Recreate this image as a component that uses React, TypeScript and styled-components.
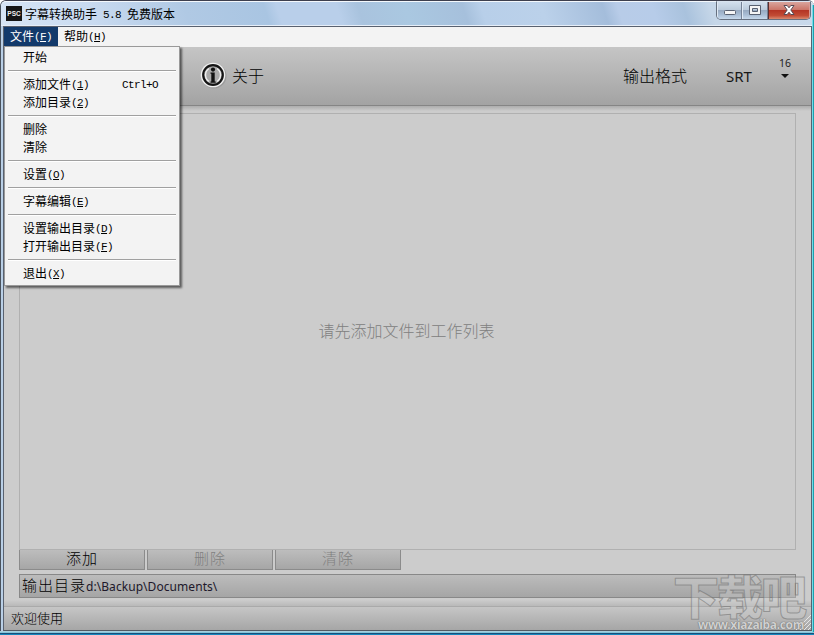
import React from "react";
import styled, { createGlobalStyle } from "styled-components";

const Global = createGlobalStyle`
  * { box-sizing: border-box; }
  html, body { margin: 0; padding: 0; overflow: hidden; }
  body { font-family: "Noto Sans CJK SC", sans-serif; color: #000; }
`;

const Frame = styled.div`
  width: 814px;
  height: 635px;
  display: flex;
  flex-direction: column;
  border-top: 1px solid #3d3f4e;
  border-left: 1px solid #4a525c;
  border-radius: 6px 6px 0 0;
  background: #b9cfe6;
  position: relative;
`;

const TitleBar = styled.header`
  height: 25px;
  flex: none;
  display: flex;
  align-items: flex-start;
  padding-left: 5px;
  border-top: 1px solid #f4f8fc;
  border-bottom: 1px solid #e6eef8;
  border-radius: 5px 5px 0 0;
  background: linear-gradient(72deg, #d7e5f5 0, #c8daf0 90px, #b0c9e4 180px, #a9c5e2 256px, #b9cfea 268px, #b9cfea 325px, #a9c3de 345px, #aac8e1 390px, #a6c0dc 445px, #b8cfe9 462px, #bbd1ea 520px, #a4bddb 578px, #b8cce8 592px, #b7cce9 625px, #a9c2dd 655px, #c5d6e8 680px, #c9d9eb 100%);
`;

const AppIcon = styled.div`
  width: 16px;
  height: 15px;
  margin: 4px 3px 0 0;
  background: #151515;
  color: #eee;
  font: bold 6.5px/15px "Liberation Sans", sans-serif;
  text-align: center;
`;

const Title = styled.div`
  flex: 1;
  height: 24px;
  font-size: 12px;
  line-height: 24px;
  white-space: pre;
`;

const Latin = styled.span`
  position: relative;
  top: -1px;
  font-family: "Liberation Mono", monospace;
  font-size: 11px;
  letter-spacing: -0.6px;
  white-space: pre;
  u { text-underline-offset: 1px; text-decoration-thickness: 1px; }
`;

const WindowControls = styled.div`
  display: flex;
  width: 95px;
  height: 19px;
  margin: -1px 3px 0 0;
  border: 1px solid #66707f;
  border-top-color: #d9e3ef;
  border-radius: 0 0 5px 5px;
  overflow: hidden;
`;

const ControlButton = styled.button<{ $width: number; $close?: boolean }>`
  width: ${(p) => p.$width}px;
  padding: 0 0 1px;
  border: 0;
  border-left: 1px solid ${(p) => (p.$close ? "#5d2d2d" : "#dfe9f4")};
  border-right: 1px solid ${(p) => (p.$close ? "#d99b94" : "#758296")};
  background: ${(p) =>
    p.$close
      ? "linear-gradient(#d9a59d 0, #cb7669 45%, #b43525 50%, #c24c35 80%, #d98a70 100%)"
      : "linear-gradient(#d2dfed 0, #bccbdc 45%, #98abc2 50%, #a9bdd4 75%, #c7d9eb 100%)"};
  svg { display: block; margin: auto; }
`;

const Client = styled.main`
  flex: none;
  width: 809px;
  height: 605px;
  margin-left: 2px;
  display: flex;
  flex-direction: column;
  border: 1px solid #59616f;
  border-bottom-color: #515b62;
  background: #ccc;
`;

const MenuBar = styled.nav`
  height: 20px;
  flex: none;
  display: flex;
  background: #f3f3f3;
`;

const MenuTitle = styled.div<{ $active?: boolean }>`
  width: 54px;
  padding-left: 6px;
  font-size: 12px;
  line-height: 18px;
  white-space: nowrap;
  color: ${(p) => (p.$active ? "#fff" : "#000")};
  background: ${(p) => (p.$active ? "#133a6b" : "transparent")};
`;

const Toolbar = styled.div`
  height: 59px;
  flex: none;
  display: flex;
  align-items: flex-start;
  padding-left: 195px;
  background: linear-gradient(#c5c5c5, #a3a3a3);
  border-bottom: 1px solid #858585;
`;

const InfoIcon = styled.svg`
  width: 28px;
  height: 28px;
  margin: 14px 5px 0 0;
`;

const ToolLabel = styled.div<{ $width: number }>`
  width: ${(p) => p.$width}px;
  padding-top: 16px;
  font-size: 16px;
  font-weight: 300;
  line-height: 24px;
  white-space: nowrap;
`;

const Format = styled.div`
  width: 52px;
  padding-top: 17px;
  font: 15px/24px "Noto Sans", sans-serif;
  color: #181818;
`;

const Count = styled.div`
  width: 14px;
  padding-top: 9px;
  text-align: center;
  font: 10.5px/14px "Noto Sans", sans-serif;
  color: #222;
  svg { display: block; margin: 4px auto 0; }
`;

const Body = styled.section`
  height: 500px;
  flex: none;
  padding: 7px 0 0 15px;
  background: linear-gradient(#adadad 0, #ccc 5px, #ccc 494px, #b9b9b9 500px);
`;

const FileList = styled.div`
  width: 777px;
  height: 437px;
  display: flex;
  align-items: center;
  justify-content: center;
  padding: 0 2px 4px 0;
  border: 1px solid #b0b0b0;
  font-size: 16px;
  font-weight: 300;
  color: #808080;
`;

const ButtonRow = styled.div`
  display: flex;
  gap: 2px;
  height: 20px;
`;

const ActionButton = styled.button`
  width: 126px;
  height: 20px;
  padding: 0 0 4px;
  border: 1px solid #8b8b8b;
  border-top: 0;
  background: linear-gradient(#bdbdbd, #a6a6a6);
  font: 300 15px/15px "Noto Sans CJK SC", sans-serif;
  letter-spacing: 1px;
  color: #000;
  &:disabled { color: #808080; }
`;

const OutputBar = styled.div`
  width: 777px;
  height: 24px;
  margin-top: 4px;
  display: flex;
  padding-left: 2px;
  border: 1px solid #888;
  background: linear-gradient(#bcbcbc, #a5a5a5);
  font-size: 15px;
  font-weight: 300;
  line-height: 20px;
`;

const OutputName = styled.span`
  width: 64px;
  letter-spacing: 1px;
  white-space: nowrap;
`;

const Path = styled.span`
  font: 12px/24px "Noto Sans", sans-serif;
  letter-spacing: 0.06px;
  color: #20182a;
`;

const StatusBar = styled.footer`
  position: relative;
  flex: 1;
  padding-left: 7px;
  border-top: 1px solid #aaa;
  background: linear-gradient(#c6c6c6, #a6a6a6);
  font-size: 13px;
  font-weight: 300;
  line-height: 21px;
`;

const Grip = styled.svg`
  position: absolute;
  right: 0;
  bottom: 0;
`;

const BottomEdge = styled.div`
  flex: none;
  height: 4px;
  margin-left: -1px;
  background: linear-gradient(#a9cfdf 0 1px, #83c5d8 1px 2px, #174f7b 2px 3px, #1587bc 3px);
`;

const RightEdge = styled.div`
  position: absolute;
  right: 0;
  top: 4px;
  width: 2px;
  bottom: 3px;
  background: linear-gradient(90deg, #73dce9 1px, #1ba0ad 1px);
`;

const Menu = styled.div`
  position: absolute;
  left: 3px;
  top: 45px;
  width: 176px;
  height: 240px;
  padding: 2px 3px 0;
  border: 1px solid #999;
  background: #f3f3f3;
  box-shadow: 2px 2px 2px rgba(0, 0, 0, 0.55);
`;

const MenuItem = styled.div`
  display: flex;
  justify-content: space-between;
  height: 18px;
  padding: 0 18px 0 15px;
  font-size: 12px;
  line-height: 16px;
  white-space: pre;
`;

const Shortcut = styled(Latin)`
  top: 1px;
`;

const Separator = styled.hr`
  height: 2px;
  margin: 3px 0 4px;
  border: 0;
  border-top: 1px solid #a0a0a0;
  background: #fff;
`;

const Watermark = styled.div`
  position: absolute;
  left: 672px;
  top: 570px;
  width: 140px;
  height: 62px;
  display: flex;
  flex-direction: column;
  pointer-events: none;
`;

const WatermarkName = styled.div`
  height: 47px;
  font-size: 46px;
  font-weight: 900;
  line-height: 46px;
  letter-spacing: -2px;
  white-space: nowrap;
  color: rgba(205, 205, 205, 0.4);
  -webkit-text-stroke: 1px rgba(115, 115, 115, 0.6);
`;

const WatermarkUrl = styled.div`
  padding-left: 25px;
  font: bold 12px/14px "Noto Sans", sans-serif;
  letter-spacing: -0.35px;
  white-space: nowrap;
  color: #d0d0d0;
  text-shadow: 0 0 1px #666, 0 0 1px #777;
`;

type Entry = { label: string; accel?: string; shortcut?: string };

const groups: Entry[][] = [
  [{ label: "开始" }],
  [{ label: "添加文件", accel: "1", shortcut: "Ctrl+O" }, { label: "添加目录", accel: "2" }],
  [{ label: "删除" }, { label: "清除" }],
  [{ label: "设置", accel: "O" }],
  [{ label: "字幕编辑", accel: "E" }],
  [{ label: "设置输出目录", accel: "D" }, { label: "打开输出目录", accel: "F" }],
  [{ label: "退出", accel: "X" }],
];

const Accel = ({ letter }: { letter: string }) => (
  <Latin>(<u>{letter}</u>)</Latin>
);

export default function App() {
  return (
    <>
      <Global />
      <Frame>
        <TitleBar>
          <AppIcon>PSC</AppIcon>
          <Title>字幕转换助手<Latin> 5.8 </Latin>免费版本</Title>
          <WindowControls>
            <ControlButton $width={25} aria-label="Minimize">
              <svg width="14" height="14"><rect x="1.5" y="7.5" width="11" height="4" rx="1" fill="#f5f5f5" stroke="#596171" /></svg>
            </ControlButton>
            <ControlButton $width={26} aria-label="Maximize">
              <svg width="14" height="14">
                <path fillRule="evenodd" d="M1.5 2.5h11v9h-11zM4.5 5.5h5v3h-5z" fill="#f5f5f5" stroke="#596171" />
              </svg>
            </ControlButton>
            <ControlButton $width={42} $close aria-label="Close">
              <svg width="14" height="14"><path d="M2 2.5h3.2L7 4.8 8.8 2.5H12L8.8 7l3.2 4.5H8.8L7 9.2l-1.8 2.3H2L5.2 7z" fill="#fff" stroke="#574b55" /></svg>
            </ControlButton>
          </WindowControls>
        </TitleBar>
        <Client>
          <MenuBar>
            <MenuTitle $active>文件<Accel letter="F" /></MenuTitle>
            <MenuTitle>帮助<Accel letter="H" /></MenuTitle>
          </MenuBar>
          <Toolbar>
            <InfoIcon viewBox="0 0 28 28">
              <circle cx="15" cy="15" r="12.5" fill="#888" opacity=".5" />
              <circle cx="14" cy="14" r="12.3" fill="#f0f0f0" />
              <circle cx="14" cy="14" r="9.8" fill="#aaa" stroke="#151515" strokeWidth="2.2" />
              <path d="M10 7.5a7.8 7.8 0 0 0 0 13M18 7.5a7.8 7.8 0 0 1 0 13" fill="none" stroke="#f0f0f0" strokeWidth="1.4" />
              <circle cx="14" cy="8.6" r="2.1" fill="#111" />
              <path d="M11.5 11.5h4.2v9h1v1.2h-5.2v-1.2h.8v-7.8h-.8z" fill="#111" />
            </InfoIcon>
            <ToolLabel $width={391}>关于</ToolLabel>
            <ToolLabel $width={103}>输出格式</ToolLabel>
            <Format>SRT</Format>
            <Count>16<svg width="8" height="4"><path d="M0 0h8L4 4z" fill="#111" /></svg></Count>
          </Toolbar>
          <Body>
            <FileList>请先添加文件到工作列表</FileList>
            <ButtonRow>
              <ActionButton>添加</ActionButton>
              <ActionButton disabled>删除</ActionButton>
              <ActionButton disabled>清除</ActionButton>
            </ButtonRow>
            <OutputBar>
              <OutputName>输出目录</OutputName>
              <Path>d:\Backup\Documents\</Path>
            </OutputBar>
          </Body>
          <StatusBar>
            欢迎使用
            <Grip width="15" height="18">
              <path d="M0 18 15 3M4 18 15 7M8 18l7-7M12 18l3-3" stroke="#e6e6e6" />
            </Grip>
          </StatusBar>
        </Client>
        <BottomEdge />
        <RightEdge />
        <Menu>
          {groups.map((group, index) => (
            <React.Fragment key={index}>
              {index > 0 && <Separator />}
              {group.map((item) => (
                <MenuItem key={item.label}>
                  <span>{item.label}{item.accel && <Accel letter={item.accel} />}</span>
                  {item.shortcut && <Shortcut>{item.shortcut}</Shortcut>}
                </MenuItem>
              ))}
            </React.Fragment>
          ))}
        </Menu>
        <Watermark>
          <WatermarkName>下载吧</WatermarkName>
          <WatermarkUrl>www.xiazaiba.com</WatermarkUrl>
        </Watermark>
      </Frame>
    </>
  );
}
